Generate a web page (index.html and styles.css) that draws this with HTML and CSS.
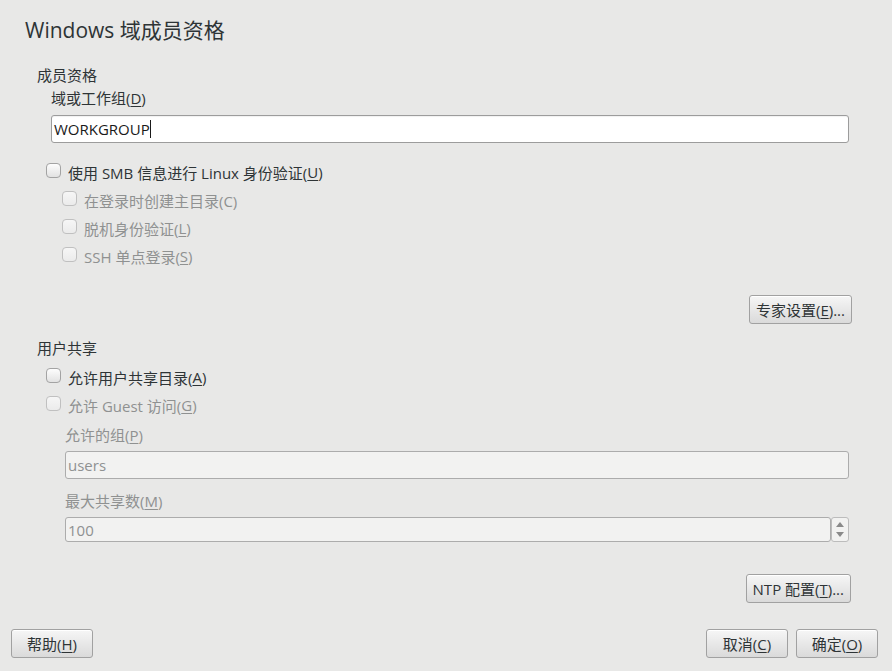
FILE: index.html
```html
<!DOCTYPE html>
<html lang="zh-CN">
<head>
	<meta charset="utf-8">
	<title>Windows 域成员资格</title>
	<link rel="stylesheet" href="styles.css">
</head>
<body>
<div class="dialog">
	<h1 class="title">Windows 域成员资格</h1>

	<div class="section-head">成员资格</div>
	<div class="field-label indent1">域或工作组(<u>D</u>)</div>
	<div class="entry entry-domain">WORKGROUP<span class="caret"></span></div>

	<div class="checks">
		<label class="check"><span class="box"></span>使用 SMB 信息进行 Linux 身份验证(<u>U</u>)</label>
		<label class="check sub disabled"><span class="box"></span>在登录时创建主目录(C)</label>
		<label class="check sub disabled"><span class="box"></span>脱机身份验证(<u>L</u>)</label>
		<label class="check sub disabled"><span class="box"></span>SSH 单点登录(<u>S</u>)</label>
	</div>

	<div class="btn-row btn-expert">
		<button class="btn btn-wide" type="button">专家设置(<u>E</u>)...</button>
	</div>

	<div class="section-head share-head">用户共享</div>
	<div class="checks share-checks">
		<label class="check"><span class="box"></span>允许用户共享目录(<u>A</u>)</label>
		<label class="check disabled"><span class="box"></span>允许 Guest 访问(<u>G</u>)</label>
	</div>

	<div class="field-label indent2 disabled first">允许的组(<u>P</u>)</div>
	<div class="entry entry-off">users</div>

	<div class="field-label indent2 disabled second">最大共享数(<u>M</u>)</div>
	<div class="spin">
		<div class="entry entry-off spin-entry">100</div>
		<div class="spin-btns">
			<span class="arrow up"></span>
			<span class="arrow down"></span>
		</div>
	</div>

	<div class="btn-row btn-ntp">
		<button class="btn btn-wide" type="button">NTP 配置(<u>T</u>)...</button>
	</div>

	<div class="footer">
		<button class="btn" type="button">帮助(<u>H</u>)</button>
		<div class="footer-right">
			<button class="btn" type="button">取消(<u>C</u>)</button>
			<button class="btn" type="button">确定(<u>O</u>)</button>
		</div>
	</div>
</div>
</body>
</html>
```
FILE: styles.css
```css
html, body {
	margin: 0;
	height: 100%;
	background: #e8e8e7;
}
body {
	font-family: "Open Sans", "Noto Sans CJK SC", sans-serif;
	font-size: 15px;
	color: #2e3436;
}
u {
	text-decoration: underline;
	text-underline-offset: 2px;
}
.dialog {
	display: flex;
	flex-direction: column;
	width: 892px;
	height: 671px;
}
.title {
	margin: 16px 0 0 25px;
	font-size: 21px;
	font-weight: normal;
	line-height: 28px;
	color: #2e3436;
}
.section-head {
	margin: 21px 0 0 37px;
	line-height: 20px;
}
.share-head {
	margin-top: 14px;
}
.field-label {
	line-height: 20px;
}
.indent1 {
	margin: 3px 0 0 51px;
}
.indent2 {
	margin-left: 65px;
}
.indent2.first {
	margin-top: 6px;
}
.indent2.second {
	margin-top: 12px;
}
.disabled {
	color: #8f9191;
}
.entry {
	box-sizing: border-box;
	height: 28px;
	margin: 7px 43px 0 51px;
	padding: 0 2px;
	display: flex;
	align-items: center;
	background: #fff;
	border: 1px solid #9c9c9c;
	border-radius: 3px;
	color: #1a1a1a;
}
.entry-domain {
	box-shadow: inset 0 1px 1px rgba(0,0,0,0.06);
}
.caret {
	display: inline-block;
	width: 1px;
	height: 18px;
	background: #1a1a1a;
}
.entry-off {
	margin: 6px 43px 0 65px;
	background: #f2f2f1;
	border-color: #acacac;
	color: #8f9191;
}
.checks {
	display: flex;
	flex-direction: column;
	margin: 15px 0 0 46px;
}
.share-checks {
	margin-top: 5px;
}
.check {
	display: flex;
	align-items: center;
	height: 28px;
}
.check.sub {
	margin-left: 16px;
}
.box {
	box-sizing: border-box;
	width: 15px;
	height: 15px;
	margin: -3px 7px 0 0;
	border: 1px solid #a3a3a3;
	border-radius: 4px;
	background: linear-gradient(#fdfdfd, #e2e2e2);
}
.check.disabled .box {
	border-color: #c0c0c0;
	background: linear-gradient(#f6f6f6, #ebebeb);
}
.btn-row {
	display: flex;
	justify-content: flex-end;
}
.btn-expert {
	margin: 25px 40px 0 0;
}
.btn-ntp {
	margin: 32px 41px 0 0;
}
.btn {
	box-sizing: border-box;
	height: 29px;
	min-width: 81px;
	padding: 0 8px;
	font: inherit;
	color: #2e3436;
	background: linear-gradient(#f6f6f6, #dadada);
	border: 1px solid #a1a1a1;
	border-radius: 3px;
	box-shadow: inset 0 1px 0 #fff;
}
.btn-wide {
	padding: 0 6px;
}
.spin {
	display: flex;
	margin: 0 43px 0 0;
}
.spin-entry {
	flex: 1;
	height: 25px;
	margin-right: 0;
	border-top-right-radius: 3px;
	border-bottom-right-radius: 3px;
}
.spin-btns {
	box-sizing: border-box;
	width: 18px;
	height: 25px;
	margin-top: 6px;
	display: flex;
	flex-direction: column;
	align-items: center;
	justify-content: space-evenly;
	background: #f2f2f1;
	border: 1px solid #bcbcbc;
	border-radius: 3px;
}
.arrow {
	width: 0;
	height: 0;
	border-left: 4px solid transparent;
	border-right: 4px solid transparent;
}
.arrow.up {
	border-bottom: 5px solid #8a8a8a;
}
.arrow.down {
	border-top: 5px solid #8a8a8a;
}
.footer {
	display: flex;
	justify-content: space-between;
	margin: 26px 14px 0 11px;
}
.footer .btn {
	width: 82px;
}
.footer-right {
	display: flex;
	gap: 8px;
}
```
